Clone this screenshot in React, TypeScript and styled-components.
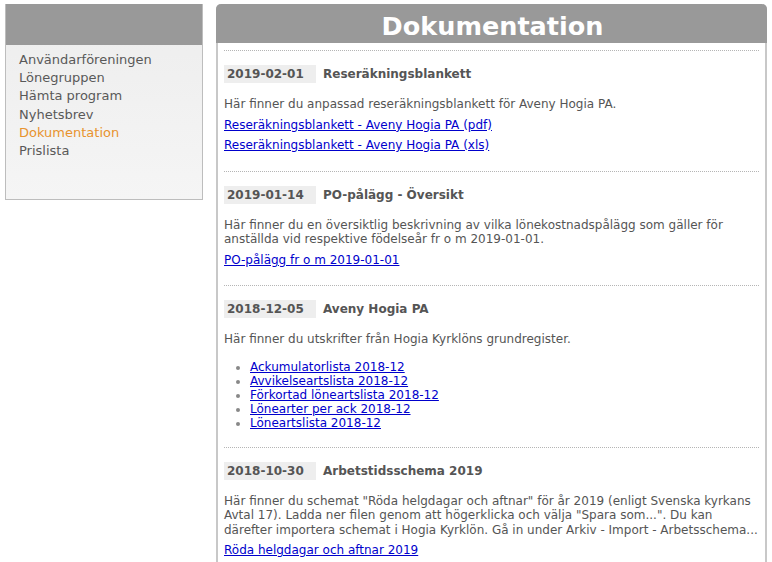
import * as React from 'react';
import styled, {createGlobalStyle} from "styled-components";

type DocLink = {
	title: string
}

type DocItem = {
	date: string
	title: string
	text: string[]
	links?: DocLink[]
	list?: DocLink[]
}

const menu = [
	'Användarföreningen',
	'Lönegruppen',
	'Hämta program',
	'Nyhetsbrev',
	'Dokumentation',
	'Prislista',
]

const items: DocItem[] = [
	{
		date: '2019-02-01',
		title: 'Reseräkningsblankett',
		text: ['Här finner du anpassad reseräkningsblankett för Aveny Hogia PA.'],
		links: [
			{title: 'Reseräkningsblankett - Aveny Hogia PA (pdf)'},
			{title: 'Reseräkningsblankett - Aveny Hogia PA (xls)'},
		],
	},
	{
		date: '2019-01-14',
		title: 'PO-pålägg - Översikt',
		text: ['Här finner du en översiktlig beskrivning av vilka lönekostnadspålägg som gäller för anställda vid respektive födelseår fr o m 2019-01-01.'],
		links: [{title: 'PO-pålägg fr o m 2019-01-01'}],
	},
	{
		date: '2018-12-05',
		title: 'Aveny Hogia PA',
		text: ['Här finner du utskrifter från Hogia Kyrklöns grundregister.'],
		list: [
			{title: 'Ackumulatorlista 2018-12'},
			{title: 'Avvikelseartslista 2018-12'},
			{title: 'Förkortad löneartslista 2018-12'},
			{title: 'Lönearter per ack 2018-12'},
			{title: 'Löneartslista 2018-12'},
		],
	},
	{
		date: '2018-10-30',
		title: 'Arbetstidsschema 2019',
		text: ['Här finner du schemat "Röda helgdagar och aftnar" för år 2019 (enligt Svenska kyrkans Avtal 17). Ladda ner filen genom att högerklicka och välja "Spara som...". Du kan därefter importera schemat i Hogia Kyrklön. Gå in under Arkiv - Import - Arbetsschema...'],
		links: [{title: 'Röda helgdagar och aftnar 2019'}],
	},
]

export default function App() {
	return (
		<>
			<GlobalStyle/>
			<Page>
				<Sidebar>
					<SidebarHead/>
					<Menu>
						{menu.map(m => (
							<MenuItem key={m} active={m === 'Dokumentation'}>{m}</MenuItem>
						))}
					</Menu>
				</Sidebar>
				<Main>
					<MainHead>Dokumentation</MainHead>
					<Content>
						{items.map(item => (
							<Section key={item.date}>
								<DateRow>
									<DateBox>{item.date}</DateBox>
									<ItemTitle>{item.title}</ItemTitle>
								</DateRow>
								{item.text.map((t, i) => <Text key={i}>{t}</Text>)}
								{item.links?.map(l => (
									<LinkLine key={l.title}><Link href="#">{l.title}</Link></LinkLine>
								))}
								{item.list && (
									<List>
										{item.list.map(l => (
											<li key={l.title}><Link href="#">{l.title}</Link></li>
										))}
									</List>
								)}
							</Section>
						))}
					</Content>
				</Main>
			</Page>
		</>
	)
}

const GlobalStyle = createGlobalStyle`
  html, body {
    margin: 0;
    padding: 0;
    background: #fff;
  }

  body {
    font-family: "DejaVu Sans", Verdana, sans-serif;
    color: #555;
  }
`

const Page = styled.div`
  display: flex;
  align-items: flex-start;
  gap: 13px;
  padding: 4px 5px 0 5px;
  height: 558px;
  overflow: hidden;
`

const Sidebar = styled.div`
  width: 196px;
  height: 195px;
  flex-shrink: 0;
  border: 1px solid #bdbdbd;
  border-top: none;
  background: linear-gradient(#ededed, #f5f5f5);
  display: flex;
  flex-direction: column;
`

const SidebarHead = styled.div`
  height: 41px;
  background: #999;
`

const Menu = styled.ul`
  list-style: none;
  margin: 0;
  padding: 6px 0 0 13px;
`

type MenuItemProps = {
	active: boolean
}

const MenuItem = styled.li<MenuItemProps>`
  font-size: 13px;
  line-height: 18.2px;
  color: ${props => (props.active ? '#e8932e' : '#595959')};
  cursor: pointer;
`

const Main = styled.div`
  width: 547px;
  flex-shrink: 0;
  border: 2px solid #c8c8c8;
  border-top: none;
  border-radius: 5px 5px 0 0;
  background: #fff;
`

const MainHead = styled.h1`
  margin: 0 -2px;
  height: 39px;
  background: #999;
  border-radius: 5px 5px 0 0;
  color: #fff;
  font-size: 25.5px;
  font-weight: bold;
  line-height: 45px;
  text-align: center;
  padding-left: 2px;
  overflow: hidden;
`

const Content = styled.div`
  padding: 7px 6px 0 6px;
`

const Section = styled.div`
  border-top: 1px dotted #b5b5b5;
  padding: 14px 0 18px 0;
`

const DateRow = styled.div`
  display: flex;
  align-items: center;
  gap: 7px;
  font-size: 12px;
  font-weight: bold;
`

const DateBox = styled.span`
  width: 89px;
  height: 18px;
  line-height: 18px;
  padding-left: 3px;
  background: #eee;
  color: #555;
`

const ItemTitle = styled.span`
  color: #555;
`

const Text = styled.p`
  margin: 14px 0 0 0;
  font-size: 12px;
  line-height: 14.5px;
`

const LinkLine = styled.div`
  margin-top: 6px;
  font-size: 12px;
  line-height: 14.5px;
`

const Link = styled.a`
  color: #0000cc;
  text-decoration: underline;
`

const List = styled.ul`
  margin: 13px 0 -1px 0;
  padding-left: 26px;
  font-size: 12px;
  line-height: 14px;
  list-style: disc;

  li::marker {
    color: #888;
  }
`
